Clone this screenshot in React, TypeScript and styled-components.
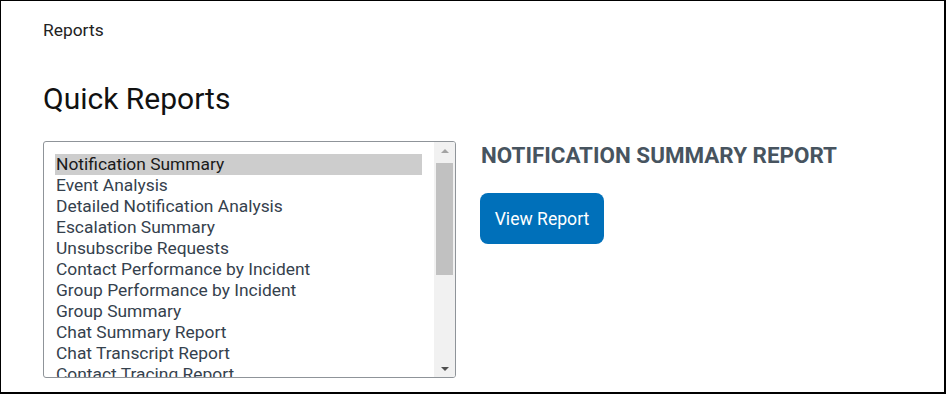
import React from "react";
import styled, { createGlobalStyle } from "styled-components";

const Global = createGlobalStyle`
  html, body { margin: 0; padding: 0; background: #fff; }
  body { font-family: Roboto, "Liberation Sans", Arial, sans-serif; }
`;

const Frame = styled.div`
  box-sizing: border-box;
  width: 946px;
  height: 394px;
  border-top: 1px solid #000;
  border-left: 1px solid #000;
  border-right: 2px solid #000;
  border-bottom: 2px solid #000;
  padding: 18px 0 0 42px;
  overflow: hidden;
  color: #1b1b1b;
`;

const Crumb = styled.div`
  font-size: 17.4px;
  line-height: 22px;
  color: #222;
`;

const Title = styled.h1`
  margin: 40px 0 0 0;
  font-weight: 400;
  font-size: 30px;
  line-height: 36px;
  color: #111;
`;

const Row = styled.div`
  display: flex;
  gap: 24px;
  margin-top: 24px;
`;

const ListBox = styled.div`
  box-sizing: border-box;
  width: 413px;
  height: 237px;
  border: 1px solid #8f9499;
  border-radius: 3px;
  display: flex;
  overflow: hidden;
`;

const Items = styled.div`
  flex: 1;
  padding: 12px 12px 0 11px;
  overflow: hidden;
`;

const Item = styled.div<{ $selected?: boolean }>`
  font-size: 17.4px;
  line-height: 21px;
  height: 21px;
  padding-left: 1px;
  white-space: nowrap;
  color: ${(p) => (p.$selected ? "#1a1a1a" : "#35414d")};
  background: ${(p) => (p.$selected ? "#cdcdcd" : "transparent")};
`;

const Scrollbar = styled.div`
  width: 21px;
  background: #f1f1f1;
  display: flex;
  flex-direction: column;
  align-items: center;
`;

const Arrow = styled.div<{ $down?: boolean }>`
  height: 17px;
  width: 100%;
  display: flex;
  align-items: center;
  justify-content: center;
  &::after {
    content: "";
    width: 0;
    height: 0;
    border-left: 4px solid transparent;
    border-right: 4px solid transparent;
    ${(p) =>
      p.$down
        ? "border-top: 4px solid #505050;"
        : "border-bottom: 4px solid #a3a3a3;"}
  }
`;

const Thumb = styled.div`
  width: 17px;
  height: 112px;
  background: #c1c1c1;
  margin-top: 4px;
`;

const Spacer = styled.div`
  flex: 1;
`;

const Detail = styled.div`
  padding-top: 0;
`;

const ReportTitle = styled.h2`
  margin: 0 0 0 1px;
  font-size: 22.4px;
  line-height: 28px;
  font-weight: 700;
  color: #47545f;
`;

const Button = styled.button`
  margin-top: 24px;
  width: 124px;
  height: 51px;
  border: none;
  border-radius: 8px;
  background: #0070ba;
  color: #fff;
  font-family: Roboto, "Liberation Sans", Arial, sans-serif;
  font-size: 17.6px;
  padding: 0;
`;

const reports = [
  "Notification Summary",
  "Event Analysis",
  "Detailed Notification Analysis",
  "Escalation Summary",
  "Unsubscribe Requests",
  "Contact Performance by Incident",
  "Group Performance by Incident",
  "Group Summary",
  "Chat Summary Report",
  "Chat Transcript Report",
  "Contact Tracing Report",
];

export default function App() {
  return (
    <>
      <Global />
      <Frame>
        <Crumb>Reports</Crumb>
        <Title>Quick Reports</Title>
        <Row>
          <ListBox>
            <Items>
              {reports.map((r, i) => (
                <Item key={r} $selected={i === 0}>
                  {r}
                </Item>
              ))}
            </Items>
            <Scrollbar>
              <Arrow />
              <Thumb />
              <Spacer />
              <Arrow $down />
            </Scrollbar>
          </ListBox>
          <Detail>
            <ReportTitle>NOTIFICATION SUMMARY REPORT</ReportTitle>
            <Button>View Report</Button>
          </Detail>
        </Row>
      </Frame>
    </>
  );
}
